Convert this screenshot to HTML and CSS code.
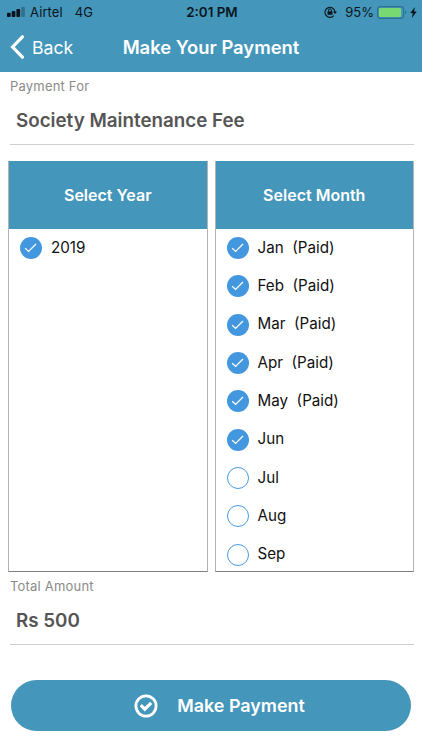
FILE: index.html
```html
<!DOCTYPE html>
<html lang="en">

<head>
    <meta charset="UTF-8">
    <meta name="viewport" content="width=device-width, initial-scale=1.0">
    <title>Make Your Payment</title>
    <link rel="stylesheet" href="styles.css">
</head>

<body>
    <!-- Shared tick used by the checked options -->
    <svg class="defs" width="0" height="0">
        <symbol id="tick" viewBox="0 0 22 22">
            <path d="M5.2 11.2l3.4 3.2 7.4-7.4" fill="none" stroke="#fff" stroke-width="1.3" />
        </symbol>
    </svg>

    <header class="header">
        <div class="status-bar">
            <div class="status-left">
                <svg class="signal" width="18" height="10" viewBox="0 0 18 10">
                    <rect x="0" y="5.8" width="3.7" height="4.2" rx="0.9" />
                    <rect x="4.7" y="4" width="3.7" height="6" rx="0.9" />
                    <rect x="9.4" y="2" width="3.7" height="8" rx="0.9" />
                    <rect x="14.2" y="0" width="3.7" height="10" rx="0.9" opacity="0.3" />
                </svg>
                <span class="carrier">Airtel</span>
                <span class="network">4G</span>
            </div>
            <span class="time">2:01 PM</span>
            <div class="status-right">
                <svg class="rotation" width="13" height="12" viewBox="0 0 13 12">
                    <path d="M9.8 9.6A5 5 0 1 1 11 6" fill="none" stroke="#0a161c" stroke-width="1.1" />
                    <path d="M9 5.5h4L11 8z" />
                    <rect x="3.5" y="5.2" width="5" height="3.6" rx="0.4" />
                    <path d="M4.6 5.4V4.2a1.4 1.4 0 0 1 2.8 0v1.2" fill="none" stroke="#0a161c" stroke-width="1" />
                </svg>
                <span class="percent">95%</span>
                <svg class="battery" width="30" height="13" viewBox="0 0 30 13">
                    <rect x="0.6" y="0.6" width="26" height="11.8" rx="2.8" fill="none" stroke="#2f7190" stroke-width="1.1" />
                    <rect x="2" y="2" width="22" height="9" rx="1.2" fill="#78d972" />
                    <path d="M28 4.5a2.2 2.2 0 0 1 0 4z" fill="#2f7190" />
                </svg>
                <svg class="bolt" width="7" height="11" viewBox="0 0 7 11">
                    <path d="M5 0L0.2 6h2.6L1.8 11 6.8 4.6H4z" />
                </svg>
            </div>
        </div>
        <div class="nav-bar">
            <a class="back">
                <svg width="14" height="24" viewBox="0 0 14 24">
                    <path d="M12.4 1.8L2.6 12l9.8 10.2" fill="none" stroke="#fff" stroke-width="3.2" stroke-linecap="round" />
                </svg>
                <span>Back</span>
            </a>
            <h1>Make Your Payment</h1>
        </div>
    </header>

    <main class="content">
        <div class="field">
            <div class="field-label">Payment For</div>
            <div class="field-value">Society Maintenance Fee</div>
        </div>

        <div class="row">
            <section class="panel">
                <h2>Select Year</h2>
                <ul>
                    <li><svg class="check checked"><use href="#tick" /></svg><span>2019</span></li>
                </ul>
            </section>
            <section class="panel">
                <h2>Select Month</h2>
                <ul>
                    <li><svg class="check checked"><use href="#tick" /></svg><span>Jan&nbsp; (Paid)</span></li>
                    <li><svg class="check checked"><use href="#tick" /></svg><span>Feb&nbsp; (Paid)</span></li>
                    <li><svg class="check checked"><use href="#tick" /></svg><span>Mar&nbsp; (Paid)</span></li>
                    <li><svg class="check checked"><use href="#tick" /></svg><span>Apr&nbsp; (Paid)</span></li>
                    <li><svg class="check checked"><use href="#tick" /></svg><span>May&nbsp; (Paid)</span></li>
                    <li><svg class="check checked"><use href="#tick" /></svg><span>Jun</span></li>
                    <li><span class="check"></span><span>Jul</span></li>
                    <li><span class="check"></span><span>Aug</span></li>
                    <li><span class="check"></span><span>Sep</span></li>
                </ul>
            </section>
        </div>

        <div class="field">
            <div class="field-label">Total Amount</div>
            <div class="field-value">Rs 500</div>
        </div>

        <button class="pay-btn">
            <svg width="24" height="24" viewBox="0 0 24 24">
                <circle cx="12" cy="12" r="10.1" fill="none" stroke="#fff" stroke-width="2.8" />
                <path d="M6.8 11.2l4 4 6.4-6.4" fill="none" stroke="#fff" stroke-width="3.2" />
            </svg>
            <span>Make Payment</span>
        </button>
    </main>
</body>

</html>
```
FILE: styles.css
```css
* {
    box-sizing: border-box;
}

body {
    font-family: Inter, "Liberation Sans", sans-serif;
    background-color: #fff;
    color: #111;
    margin: 0;
    padding: 0;
    width: 422px;
    height: 750px;
    overflow: hidden;
}

svg {
    display: block;
    flex: none;
}

.defs {
    position: absolute;
}

.header {
    height: 72px;
    background-color: #4496bb;
}

.status-bar {
    display: grid;
    grid-template-columns: 1fr auto 1fr;
    align-items: center;
    height: 24px;
    padding: 0 5px 0 7px;
    font-size: 13px;
    color: #0a161c;
}

.status-bar svg {
    fill: #0a161c;
}

.status-left,
.status-right {
    display: flex;
    align-items: center;
}

.status-right {
    justify-content: flex-end;
}

.carrier {
    margin-left: 5px;
    letter-spacing: 0.1px;
}

.network {
    margin-left: 12px;
}

.time {
    font-size: 13.4px;
    font-weight: 600;
}

.percent {
    margin-left: 8px;
}

.battery {
    margin-left: 3px;
}

.bolt {
    margin-left: 3px;
}

.nav-bar {
    display: grid;
    grid-template-columns: 100px 1fr 100px;
    align-items: center;
    height: 46px;
    color: #fff;
}

.back {
    display: flex;
    align-items: center;
    gap: 8px;
    padding-left: 10px;
    font-size: 17.7px;
}

h1 {
    margin: 0;
    font-size: 18.4px;
    font-weight: 600;
    text-align: center;
    white-space: nowrap;
}

.content {
    padding: 0 8px;
}

.field {
    height: 73px;
    margin: 0 0 0 2px;
    border-bottom: 1px solid #cfcfcf;
}

.field-label {
    height: 29px;
    font-size: 13px;
    line-height: 29px;
    letter-spacing: 0.2px;
    color: #8a8a8a;
}

.field-value {
    padding-left: 6px;
    font-size: 18.8px;
    font-weight: 600;
    line-height: 40px;
    color: #555;
}

.row {
    display: flex;
    gap: 7px;
    margin: 16px 0 0;
}

.panel {
    flex: 1;
    height: 411px;
    border: 1px solid #b4b4b4;
    border-top: none;
    border-bottom-color: #808080;
}

.panel h2 {
    height: 68px;
    margin: 0;
    background-color: #4496bb;
    color: #fff;
    font-size: 16px;
    font-weight: 600;
    line-height: 69px;
    text-align: center;
}

.panel ul {
    list-style: none;
    margin: 0;
    padding: 0 0 0 11px;
}

.panel li {
    display: flex;
    align-items: center;
    gap: 9px;
    height: 38.3px;
    font-size: 15.2px;
}

.panel li span:last-child {
    margin-top: -1.5px;
}

.check {
    flex: none;
    width: 22px;
    height: 22px;
    border: 1px solid #4a9ae0;
    border-radius: 50%;
}

.checked {
    border: none;
    background-color: #4397de;
}

.pay-btn {
    display: flex;
    align-items: center;
    justify-content: center;
    gap: 19px;
    width: 400px;
    height: 51px;
    margin: 35px 0 0 3px;
    padding: 0 0 0 17px;
    background-color: #4496bb;
    color: #fff;
    border: none;
    border-radius: 26px;
    font-family: inherit;
    font-size: 17.9px;
    font-weight: 600;
}
```
